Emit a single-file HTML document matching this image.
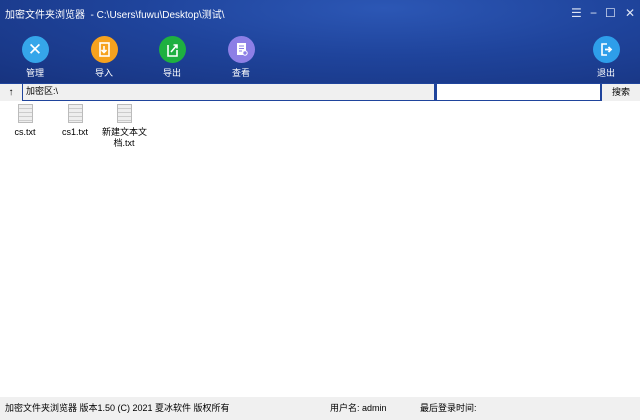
<!DOCTYPE html><html><head><meta charset="utf-8"><style>
*{margin:0;padding:0;box-sizing:border-box}
body{width:640px;height:420px;overflow:hidden;background:#fff;font-family:"Liberation Sans","Noto Sans CJK SC",sans-serif;font-size:9px;color:#000;position:relative}
.hdr{position:absolute;left:0;top:0;width:640px;height:83px;background:radial-gradient(ellipse at 60% 10%,#2c57b5 0%,#1f449c 45%,#17337f 100%)}
.title{position:absolute;left:5px;top:6px;color:#fff;font-size:10px}
.btn{position:absolute;top:36px;width:40px;text-align:center;color:#fff;font-size:9px}
.btn .c{width:27px;height:27px;border-radius:50%;margin:0 auto 3px;position:relative}
.btn svg{position:absolute;left:6px;top:6px}
.wc{position:absolute;top:6px;color:#dfe6f5;font-size:12px}
.bar{position:absolute;top:83px;left:0;width:640px;height:18px;background:#1f449c}
.up{position:absolute;left:0;top:84px;width:22px;height:17px;background:#f0f0f0;text-align:center;font-size:10px;line-height:17px}
.addr{position:absolute;left:23px;top:84px;width:411px;height:16px;background:#f0f0f0;line-height:15px;padding-left:3px}
.srch{position:absolute;left:437px;top:84px;width:163px;height:16px;background:#fff}
.sb{position:absolute;left:602px;top:84px;width:38px;height:17px;background:#f0f0f0;text-align:center;line-height:17px}
.f{position:absolute;top:104px;width:44px;text-align:center;font-size:9px;line-height:11px;white-space:nowrap}
.f .i{width:15px;height:19px;margin:0 auto 4px;background:#eee;border:1px solid #bbb;background-image:repeating-linear-gradient(#eee 0 3px,#ccc 3px 4px)}
.status{position:absolute;left:0;top:397px;width:640px;height:23px;background:#f0f0f0;line-height:23px;font-size:9px}
</style></head><body>
<div class="hdr">
<div class="title">加密文件夹浏览器&nbsp; - C:\Users\fuwu\Desktop\测试\</div>
<div class="wc" style="left:571px">☰</div><div class="wc" style="left:590px">−</div><div class="wc" style="left:605px">☐</div><div class="wc" style="left:625px">✕</div>
<div class="btn" style="left:15px"><div class="c" style="background:#35a6ea;color:#fff;font-size:17px;line-height:27px">✕</div>管理</div>
<div class="btn" style="left:84px"><div class="c" style="background:#f6a21e"><svg width="15" height="15"><rect x="3" y="1" width="9" height="13" fill="none" stroke="#fff" stroke-width="1.6"/><path d="M7 4v6M4.5 8l2.5 2.5L9.5 8" stroke="#fff" stroke-width="1.6" fill="none"/></svg></div>导入</div>
<div class="btn" style="left:152px"><div class="c" style="background:#1eb040"><svg width="15" height="15"><path d="M3 3v11h9V8" fill="none" stroke="#fff" stroke-width="1.6"/><path d="M6 10L12 3M8.5 3H12v3.5" stroke="#fff" stroke-width="1.6" fill="none"/></svg></div>导出</div>
<div class="btn" style="left:221px"><div class="c" style="background:#8d7fe6"><svg width="15" height="15"><rect x="3" y="1" width="9" height="12" fill="#fff"/><path d="M5 4h5M5 6.5h5M5 9h3" stroke="#8d7fe6" stroke-width="1"/><circle cx="11" cy="11" r="2.2" fill="#8d7fe6" stroke="#fff"/></svg></div>查看</div>
<div class="btn" style="left:586px"><div class="c" style="background:#2e9eea"><svg width="15" height="15"><path d="M8 2H3v11h5" fill="none" stroke="#fff" stroke-width="1.6"/><path d="M6 7.5h6M9.5 5l2.5 2.5L9.5 10" stroke="#fff" stroke-width="1.8" fill="none"/></svg></div>退出</div>
</div>
<div class="bar"></div>
<div class="up">↑</div>
<div class="addr">加密区:\</div>
<div class="srch"></div>
<div class="sb">搜索</div>
<div class="f" style="left:3px"><div class="i"></div>cs.txt</div>
<div class="f" style="left:53px"><div class="i"></div>cs1.txt</div>
<div class="f" style="left:102px"><div class="i"></div>新建文本文<br>档.txt</div>
<div class="status"><span style="position:absolute;left:5px">加密文件夹浏览器 版本1.50 (C) 2021 夏冰软件 版权所有</span><span style="position:absolute;left:330px">用户名: admin</span><span style="position:absolute;left:420px">最后登录时间:</span></div>
</body></html>
